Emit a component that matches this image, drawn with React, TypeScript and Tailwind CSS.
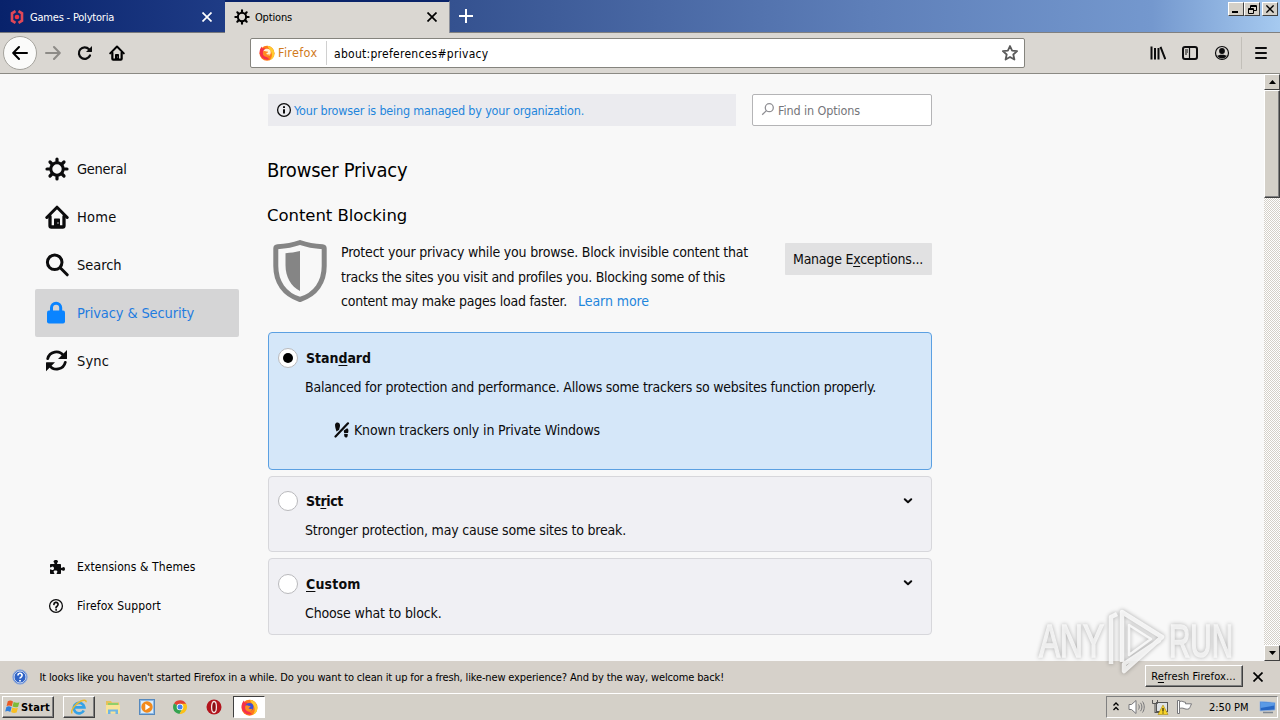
import React from 'react';

const SettingsIcon = ({ size }: { size: number }) => (
  <svg width={size} height={size} viewBox="0 0 24 24" fill="none" stroke="currentColor" className="shrink-0">
    <circle cx="12" cy="12" r="6.2" strokeWidth="3" />
    <path d="M12 5V2M12 22v-3M5 12H2M22 12h-3M7 7 5 5M19 19l-2-2M7 17l-2 2M19 5l-2 2" strokeWidth="3.2" strokeLinecap="round" />
  </svg>
);

const HomeIcon = ({ size }: { size: number }) => (
  <svg width={size} height={size} viewBox="0 0 24 24" fill="none" stroke="currentColor" strokeLinecap="round" strokeLinejoin="round" className="shrink-0">
    <path d="M1.8 12.5 12 2.2l10.2 10.3" strokeWidth="3" />
    <path d="M5 11.5v9.2c0 .8.4 1.3 1.3 1.3h11.4c.9 0 1.3-.5 1.3-1.3v-9.2" strokeWidth="3.3" />
    <path d="M9 22v-7.5c0-.6.4-1 1-1h4c.6 0 1 .4 1 1V22z" fill="currentColor" stroke="none" />
    <circle cx="13" cy="18" r=".7" fill="#f9f9fa" stroke="none" />
  </svg>
);

const SearchIcon = () => (
  <svg width="24" height="24" viewBox="0 0 24 24" fill="none" stroke="currentColor" strokeWidth="3" strokeLinecap="round" className="shrink-0">
    <circle cx="9.7" cy="9.3" r="7.3" />
    <path d="m15.2 14.800 7 7" />
  </svg>
);

const LockIcon = () => (
  <svg width="24" height="24" viewBox="0 0 24 24" className="shrink-0">
    <path d="M6.500 11V6.800a4.600 4.600 0 0 1 9.200 0V11" fill="none" stroke="currentColor" strokeWidth="3" />
    <rect x="2" y="9.500" width="18" height="13" rx="2" fill="currentColor" />
  </svg>
);

const SyncIcon = () => (
  <svg width="24" height="24" viewBox="0 0 24 24" fill="none" stroke="currentColor" strokeWidth="2.800" strokeLinecap="round" className="shrink-0">
    <path d="M2.700 9.700A8.800 8.800 0 0 1 18.600 6.800M20.300 13.300A8.800 8.800 0 0 1 4.400 16.200" />
    <path d="M22 .9v8.500c0 .4-.2.600-.6.600h-8.400zM1 22.300v-8.500c0-.4.200-.6.600-.6H10z" fill="currentColor" stroke="none" />
  </svg>
);

const FirefoxLogo = ({ size, core }: { size: number; core: string }) => (
  <svg width={size} height={size} viewBox="0 0 16 16" className="shrink-0">
    <circle cx="8" cy="8.2" r="7.5" fill="#ff7a1a" />
    <path d="M8.4.8c3.6.6 6.8 3.2 7 7.4a7.4 7.4 0 0 1-4.9 7.1c2.6-2.4 3-5.5 1.8-8C11.4 5 9.500 4 8.400.8z" fill="#ffcb2e" />
    <path d="M.6 7.200C.7 4.500 1.500 3 2.700 1.500c.1.900.4 1.500.900 1.900.9-.3 1.700-.2 2.500.1L4.500 9.500l6 4.800A7.500 7.500 0 0 1 .6 7.200z" fill="#f5304a" />
    <circle cx="8" cy="7.400" r="3.700" fill={core} />
    <path d="M4 6.400c1.300-.9 2.600-.5 3.400.2.700.1 1.500 0 1.700.3-.2.900-1.500 1-1.900 1.900.6.900 2.100.9 3.500.1-.5 1.900-2 3-3.800 2.800-2.200-.2-3.500-2.400-2.900-5.300z" fill="#ff8a22" />
  </svg>
);

const CloseIcon = ({ size = 10 }: { size?: number }) => (
  <svg width={size} height={size} viewBox="0 0 10 10" stroke="currentColor" strokeWidth="1.700" className="shrink-0">
    <path d="m.5.5 9 9M9.500.5l-9 9" />
  </svg>
);

const Radio = ({ checked }: { checked?: boolean }) => (
  <span className="w-5 h-5 shrink-0 rounded-full border border-[#b9b9bc] bg-white flex items-center justify-center">
    {checked && <span className="w-[10px] h-[10px] rounded-full bg-black" />}
  </span>
);

const Chevron = () => (
  <svg width="10" height="6" viewBox="0 0 10 6" fill="none" stroke="#0c0c0d" strokeWidth="2" strokeLinecap="round" strokeLinejoin="round">
    <path d="m1.800 1.200 3.200 3 3.200-3" />
  </svg>
);

const bevel = 'bg-[#d4d0c8] border border-t-white border-l-white border-r-[#404040] border-b-[#404040]';

const navItems = [
  { label: 'General', icon: <SettingsIcon size={24} />, track: 'tracking-[-0.27px]' },
  { label: 'Home', icon: <HomeIcon size={24} />, track: 'tracking-[0.24px]' },
  { label: 'Search', icon: <SearchIcon />, track: 'tracking-[-0.05px]' },
  { label: 'Privacy & Security', icon: <LockIcon />, track: 'tracking-[-0.12px]', active: true },
  { label: 'Sync', icon: <SyncIcon />, track: 'tracking-[0.14px]' },
];

const TabStrip = () => (
  <div className="h-[33px] shrink-0 flex text-[11px] leading-4 bg-[linear-gradient(90deg,#0a246a_0%,#0d2a72_8%,#34518f_35%,#5e7fb9_68%,#7498ce_90%,#a6caf0_100%)]">
    <div className="w-[225px] border-b border-[#77787c] flex items-center text-white pl-[9px] pt-px pr-[13px] bg-[linear-gradient(90deg,#08226b,#1f3c86)]">
      <svg width="16" height="16" viewBox="0 0 16 16" fill="none" stroke="#e04858" strokeWidth="2.600">
        <path d="M6.500 2.200 3 4.300v7.400l3.500 2.100M9.500 2.200 13 4.300v7.400l-3.500 2.100" />
        <circle cx="8" cy="8" r="2.300" fill="#f03445" stroke="none" />
      </svg>
      <span className="ml-[5px] mt-[2px] tracking-[-0.2px]">Games - Polytoria</span>
      <span className="ml-auto"><CloseIcon /></span>
    </div>
    <div className="w-[225px] border-t-2 border-r border-t-[#0a246a] border-r-[#8b8f9a] bg-[#dad7d2] flex items-center pl-[9px] pr-[12px] pb-px">
      <SettingsIcon size={16} />
      <span className="ml-[5px] mt-[2px] tracking-[-0.17px]">Options</span>
      <span className="ml-auto"><CloseIcon /></span>
    </div>
    <div className="flex-1 border-b border-[#808080] flex items-start">
      <svg width="14" height="14" viewBox="0 0 14 14" stroke="#fff" strokeWidth="2" className="ml-[9px] mt-[9px]">
        <path d="M7 0v14M0 7h14" />
      </svg>
      <div className="ml-auto flex pt-[2px] pr-[2px]">
        <div className={`w-4 h-[14px] flex items-end pl-[3px] pb-[2px] ${bevel}`}>
          <span className="w-[6px] h-[2px] bg-black" />
        </div>
        <div className={`w-4 h-[14px] flex items-center justify-center ${bevel}`}>
          <svg width="9" height="9" viewBox="0 0 9 9" fill="none" stroke="#000">
            <path d="M2.500 3V.5h6v5H6M2.500 1.500h6M.5 3.500h5v5h-5zM.5 4.500h5" />
          </svg>
        </div>
        <div className={`w-4 h-[14px] ml-[2px] flex items-center justify-center ${bevel}`}>
          <CloseIcon size={8} />
        </div>
      </div>
    </div>
  </div>
);

const NavBar = () => (
  <div className="h-[41px] shrink-0 bg-[#dad7d2] border-b border-[#8b8a84] flex items-center pl-[3px]">
    <span className="w-[34px] h-[34px] rounded-full bg-[#fbfbfa] border border-[#a5a39d] flex items-center justify-center">
      <svg width="16" height="16" viewBox="0 0 16 16" fill="none" stroke="#000" strokeWidth="2" strokeLinecap="round" strokeLinejoin="round">
        <path d="M15 8H1.500M7 2 1.200 8 7 14" />
      </svg>
    </span>
    <svg width="16" height="16" viewBox="0 0 16 16" fill="none" stroke="#8d8b87" strokeWidth="2" strokeLinecap="round" strokeLinejoin="round" className="ml-[8px]">
      <path d="M1 8h13.500M9 2l5.800 6L9 14" />
    </svg>
    <svg width="16" height="16" viewBox="0 0 16 16" fill="none" stroke="#0c0c0d" strokeWidth="2.200" strokeLinecap="round" className="ml-[16px]">
      <path d="M13 10.500A5.800 5.800 0 1 1 12 4.200" />
      <path d="M15 1v5.600c0 .3-.2.400-.4.400H9z" fill="#0c0c0d" stroke="none" />
    </svg>
    <span className="ml-4"><HomeIcon size={16} /></span>
    <div className="ml-[125px] w-[775px] h-[30px] bg-white border border-[#85847e] rounded-[2px] flex items-center pl-2 text-[12px]">
      <FirefoxLogo size={16} core="#fff3d6" />
      <span className="ml-[3px] mt-px w-[48px] text-[12.5px] tracking-[0.34px] text-[#d17a1c]">Firefox</span>
      <span className="w-px h-6 bg-[#d0d0d0]" />
      <span className="ml-[7px] mt-px tracking-[0.28px]">about:preferences#privacy</span>
      <svg width="16" height="16" viewBox="0 0 16 16" fill="none" stroke="#5a5a5a" strokeWidth="1.800" strokeLinejoin="round" className="ml-auto mr-[6px]">
        <path d="m8 1 2.100 4.600 5 .5-3.800 3.400 1.100 5L8 12l-4.400 2.500 1.100-5L.9 6.100l5-.5z" />
      </svg>
    </div>
    <svg width="16" height="16" viewBox="0 0 16 16" fill="none" stroke="#0c0c0d" strokeWidth="2" className="ml-[125px]">
      <path d="M1.500 1.500v13M5 3v11.500M8.500 3v11.500M10.500 1.800l4.800 12.400" />
    </svg>
    <svg width="16" height="16" viewBox="0 0 16 16" fill="none" stroke="#0c0c0d" className="ml-4">
      <rect x="1" y="2" width="14" height="12" rx="2" strokeWidth="2" />
      <path d="M7.500 2v12" strokeWidth="1.200" />
      <path d="M3 5h3M3 7h3M3 9h2" />
    </svg>
    <svg width="16" height="16" viewBox="0 0 16 16" className="ml-4">
      <circle cx="8" cy="8" r="6.500" fill="none" stroke="#0c0c0d" strokeWidth="1.200" />
      <circle cx="8" cy="6" r="2.900" fill="#0c0c0d" />
      <path d="M3.200 10.500c1.500 0 2-.8 3-.8h3.600c1 0 1.500.8 3 .8a5.400 5.400 0 0 1-9.600 0z" fill="#0c0c0d" />
    </svg>
    <span className="ml-[11px] w-px h-8 bg-[#c2bfb9]" />
    <svg width="12" height="12" viewBox="0 0 12 12" stroke="#0c0c0d" strokeWidth="2" strokeLinecap="round" className="ml-[13px]">
      <path d="M1 1h10M1 6h10M1 11h10" />
    </svg>
  </div>
);

const Sidebar = () => (
  <div className="w-[239px] shrink-0 pl-[35px] pt-[71px]">
    {navItems.map((item) => (
      <div
        key={item.label}
        className={`h-12 rounded-[2px] flex items-center pl-[10px] text-[14.5px] ${item.track} ${item.active ? 'bg-[#d5d5d6] text-[#0a84ff]' : 'text-[#0c0c0d]'}`}
      >
        {item.icon}
        <span className={`ml-2 mt-px ${item.active ? 'text-[#1f7ce0]' : ''}`}>{item.label}</span>
      </div>
    ))}
    <div className="mt-[162px] h-[39px] flex items-center pl-[14px] text-[12px]">
      <svg width="16" height="16" viewBox="0 0 16 16" fill="#0c0c0d">
        <path d="M14.500 8c-.9 0-1.100 1-1.900 1-.4 0-.6-.4-.6-.8V6c0-.6-.4-1-1-1H8.800c-.5 0-.8-.2-.8-.6 0-.8 1-.9 1-1.900S8 1 6.800 1 4.500 1.600 4.500 2.500s1 1.100 1 1.900c0 .4-.3.600-.8.600H2c-.6 0-1 .4-1 1v1.700c0 .5.200.800.600.8.800 0 .9-1 1.900-1S5 8.600 5 9.500 4.400 11 3.500 11s-1.100-.8-1.900-.8c-.4 0-.6.3-.6.800v3c0 .6.400 1 1 1h2.600c.5 0 .8-.2.800-.6 0-.8-.8-.8-.8-1.700s.8-1.200 1.900-1.200 1.900.4 1.900 1.200-.8 1-.8 1.700c0 .4.300.6.800.6H11c.6 0 1-.4 1-1v-2.300c0-.5.200-.8.600-.8.800 0 1 .9 1.900.9S16 11 16 9.900 15.400 8 14.500 8z" />
      </svg>
      <span className="ml-3 tracking-[0.09px]">Extensions &amp; Themes</span>
    </div>
    <div className="h-[39px] flex items-center pl-[13px] text-[12px]">
      <svg width="16" height="16" viewBox="0 0 16 16" fill="none" stroke="#0c0c0d" strokeLinecap="round">
        <circle cx="8" cy="8" r="6.400" strokeWidth="1.300" />
        <path d="M5.900 6.500a2.100 2.100 0 1 1 3.200 1.700c-.7.500-1.100.8-1.100 1.500" strokeWidth="1.700" />
        <circle cx="8" cy="11.900" r=".5" strokeWidth="1" />
      </svg>
      <span className="ml-[13px] tracking-[0.155px]">Firefox Support</span>
    </div>
  </div>
);

const Preferences = () => (
  <div className="ml-[29px] w-[664px] shrink-0 pt-5 text-[14px] text-[#0c0c0d]">
    <div className="flex gap-4">
      <div className="w-[468px] h-8 bg-[#ebebef] flex items-center pl-2 text-[12.5px]">
        <svg width="16" height="16" viewBox="0 0 16 16" fill="none" stroke="#0c0c0d">
          <circle cx="8" cy="8" r="6.400" strokeWidth="1.300" />
          <path d="M8 7.200v4.300M8 4.200v1.900" strokeWidth="2" />
        </svg>
        <span className="ml-[2px] mt-[2px] tracking-[-0.193px] text-[#1f86dc]">Your browser is being managed by your organization.</span>
      </div>
      <div className="w-[180px] h-8 bg-white border border-[#b4b4b6] rounded-[2px] flex items-center pl-2 text-[12.5px] text-[#75757a]">
        <svg width="14" height="14" viewBox="0 0 14 14" fill="none" stroke="#8f8f94" strokeWidth="1.300" className="mb-[3px]">
          <circle cx="8.300" cy="5.700" r="4" />
          <path d="m5.400 8.600-4.200 4.200" />
        </svg>
        <span className="ml-[3px] mt-[2px] tracking-[-0.116px]">Find in Options</span>
      </div>
    </div>
    <h1 className="mt-8 text-[20px] leading-6 tracking-[-0.22px] -ml-px text-black">Browser Privacy</h1>
    <h2 className="mt-[22px] text-[16.5px] leading-6 tracking-[-0.05px] -ml-px text-black font-['DejaVu_Sans',sans-serif]">Content Blocking</h2>
    <div className="mt-3 h-[92px] flex items-start">
      <svg width="64" height="64" viewBox="0 0 64 64">
        <path d="M32 2.500c8 2.800 15 3.800 22.500 4.300 1 .1 1.700.8 1.700 1.800v17.500C56.200 42 48 54.500 32 59.500 16 54.500 7.800 42 7.800 26.100V8.600c0-1 .7-1.700 1.700-1.800C17 6.300 24 5.300 32 2.500z" fill="none" stroke="#858585" strokeWidth="5" strokeLinejoin="round" />
        <path d="M32 11v40c-9-4.500-14.500-14-14.500-26V13.200C22.500 12.800 27 12.200 32 11z" fill="#858585" />
      </svg>
      <div className="ml-[9px] w-[444px] leading-[24.4px] whitespace-nowrap">
        <p className="tracking-[-0.193px]">Protect your privacy while you browse. Block invisible content that</p>
        <p className="tracking-[-0.269px] mt-[0.600px] -mb-[0.600px]">tracks the sites you visit and profiles you. Blocking some of this</p>
        <p className="tracking-[-0.241px]">
          content may make pages load faster.
          <a className="ml-[11px] tracking-[-0.07px] text-[#1f86dc]">Learn more</a>
        </p>
      </div>
      <button className="mt-[3px] w-[147px] h-8 rounded-[1px] bg-[#e1e1e2] pr-px tracking-[-0.228px] whitespace-nowrap">
        Manage E<span className="underline underline-offset-2">x</span>ceptions...
      </button>
    </div>

    <div className="flex flex-col gap-[6px] leading-5">
      <div className="h-[138px] rounded-[4px] border border-[#5ba0e2] bg-[#d5e7f9] pl-[9px] pt-[15px]">
        <div className="flex">
          <Radio checked />
          <b className="ml-2 tracking-[-0.04px]">Stan<span className="underline underline-offset-2">d</span>ard</b>
        </div>
        <p className="mt-[9px] pl-[27px] tracking-[-0.241px] whitespace-nowrap">Balanced for protection and performance. Allows some trackers so websites function properly.</p>
        <div className="mt-[23px] pl-14 flex items-center">
          <svg width="16" height="16" viewBox="0 0 16 16" className="mr-1">
            <path d="M2 .9c2-.9 3.900.1 4 2.300.1 1.900-.7 3-.8 4.500L2.500 9.500C2 7.300-.2 2.300 2 .9zM9.800 8.400l3.300-2.200c1.800.9 1.400 3.200.9 4.800l-3.700.2c-.3-.9-.6-1.900-.5-2.800zM10.200 12h3.500c.3 2-.4 3.500-1.800 3.500s-1.900-1.600-1.700-3.500z" fill="#0c0c0d" />
            <path d="M14 1.300 1.500 14.500" fill="none" stroke="#0c0c0d" strokeWidth="2.200" strokeLinecap="round" />
          </svg>
          <span className="tracking-[-0.144px]">Known trackers only in Private Windows</span>
        </div>
      </div>
      <div className="h-[76px] rounded-[4px] border border-[#d7d7db] bg-[#f0f0f4] pl-[9px] pt-[14px]">
        <div className="flex">
          <Radio />
          <b className="ml-2 tracking-[-0.35px]">St<span className="underline underline-offset-2">r</span>ict</b>
          <span className="ml-auto mr-[18px] mt-[7px]"><Chevron /></span>
        </div>
        <p className="mt-[9px] pl-[27px] tracking-[-0.195px]">Stronger protection, may cause some sites to break.</p>
      </div>
      <div className="h-[77px] rounded-[4px] border border-[#d7d7db] bg-[#f0f0f4] pl-[9px] pt-[15px]">
        <div className="flex">
          <Radio />
          <b className="ml-2 tracking-[0.16px]"><span className="underline underline-offset-2">C</span>ustom</b>
          <span className="ml-auto mr-[18px] mt-[6px]"><Chevron /></span>
        </div>
        <p className="mt-[9px] pl-[27px] tracking-[-0.143px]">Choose what to block.</p>
      </div>
    </div>
  </div>
);

const Scrollbar = () => (
  <div className="ml-auto w-4 shrink-0 flex flex-col bg-[repeating-conic-gradient(#fff_0_25%,#d4d0c8_0_50%)] bg-[length:2px_2px]">
    <div className={`h-4 flex items-center justify-center ${bevel}`}>
      <svg width="7" height="4"><path d="M3.500 0 7 4H0z" /></svg>
    </div>
    <div className={`h-[108px] ${bevel} shadow-[inset_-1px_-1px_#808080]`} />
    <div className={`mt-auto h-4 flex items-center justify-center ${bevel}`}>
      <svg width="7" height="4"><path d="M3.500 4 7 0H0z" /></svg>
    </div>
  </div>
);

const NotificationBar = () => (
  <div className="h-8 shrink-0 bg-[#d6d1ca] flex items-center pl-3 text-[11px] leading-4 whitespace-nowrap">
    <svg width="16" height="16" viewBox="0 0 16 16">
      <circle cx="8" cy="8" r="7.300" fill="#2f63c6" stroke="#9fb4da" />
      <circle cx="8" cy="8" r="6" fill="none" stroke="#fff" strokeWidth=".8" />
      <path d="M5.900 6.400a2.100 2.100 0 1 1 3.100 1.800c-.7.400-1 .8-1 1.400M8 11v1.500" fill="none" stroke="#fff" strokeWidth="1.700" />
    </svg>
    <span className="ml-[11.500px] mt-[2px] tracking-[-0.142px]">
      It looks like you haven't started Firefox in a while. Do you want to clean it up for a fresh, like-new experience? And by the way, welcome back!
    </span>
    <button className={`ml-auto w-[98px] h-[22px] mb-[2px] pt-px pr-px tracking-[0.1px] ${bevel} shadow-[inset_-1px_-1px_#808080]`}>
      R<span className="underline underline-offset-2">e</span>fresh Firefox...
    </button>
    <span className="ml-[10px] mr-[17px]"><CloseIcon /></span>
  </div>
);

const Taskbar = () => (
  <div className="h-[27px] shrink-0 bg-[#d4d0c8] border-t border-white flex items-center pl-[2px] pr-[2px] text-[11px] leading-4">
    <div className={`w-[52px] h-[22px] flex items-center pl-[2px] ${bevel} shadow-[inset_-1px_-1px_#808080]`}>
      <svg width="16" height="16" viewBox="0 0 16 16" className="shrink-0">
        <path d="M2.800 2.200c2-1 3.500-.7 5.200.3L6.800 7.300c-1.700-1-3.200-1.200-5.200-.3z" fill="#ea5a24" />
        <path d="M8.700 2.900c1.800 1 3.500 1.100 5.700.3l-1.300 4.600c-2 .8-3.800.7-5.600-.3z" fill="#7dbb38" />
        <path d="M1.400 7.900c2-.9 3.500-.6 5.200.3L5.300 13c-1.700-1-3.200-1.300-5.100-.4z" fill="#2f7fdc" />
        <path d="M7.300 8.500c1.800 1 3.600 1.100 5.600.3l-1.300 4.700c-2 .8-3.800.6-5.500-.4z" fill="#f8bf22" />
      </svg>
      <b className="tracking-[0.17px] mt-px">Start</b>
    </div>
    <div className={`ml-[9px] w-8 h-[22px] flex items-center justify-center ${bevel} shadow-[inset_-1px_-1px_#808080]`}>
      <svg width="18" height="18" viewBox="0 0 18 18" fill="none">
        <path d="M13.800 12.500A5.300 5.300 0 1 1 14.300 9.300H5" stroke="#35a2e6" strokeWidth="2.700" />
        <path d="M2 15.500C.5 13 4.500 6 11 3c3-1.400 5.300-1 5.200 1.200" stroke="#e9b92f" strokeWidth="1.400" />
      </svg>
    </div>
    <svg width="18" height="18" viewBox="0 0 18 18" className="ml-[9px]">
      <path d="M2 3h5l1 1.500h7V15H2z" fill="#e6c25a" />
      <path d="M4 5h10v5H4z" fill="#8fcf6a" />
      <path d="M2 7h14v8.500H2z" fill="#f8e397" />
      <path d="M4 16v-4.500h10V16h-2.500v-2.500h-5V16z" fill="#6fb5e4" />
    </svg>
    <svg width="16" height="16" viewBox="0 0 16 16" className="ml-[17px]">
      <rect x=".5" y=".5" width="15" height="15" fill="#8db9e6" stroke="#5689bd" />
      <rect x="2" y="2" width="12" height="12" fill="#d9ecfb" />
      <circle cx="8" cy="8" r="5.700" fill="#f28a1c" />
      <path d="m6.300 4.800 5 3.200-5 3.200z" fill="#fff" />
    </svg>
    <svg width="16" height="16" viewBox="0 0 16 16" className="ml-[17px]">
      <path d="M8 8 2 4.500A7 7 0 0 1 14.200 5z" fill="#e34133" />
      <path d="M2 4.500A7 7 0 0 0 7.500 15L10.500 9.500 8 8z" fill="#34a350" />
      <path d="M14.200 4.800A7 7 0 0 1 7.500 15L11 9 8 4.800z" fill="#fbc116" />
      <circle cx="8" cy="8" r="3.300" fill="#fff" />
      <circle cx="8" cy="8" r="2.500" fill="#4283ee" />
    </svg>
    <svg width="16" height="16" viewBox="0 0 16 16" className="ml-[18px]">
      <circle cx="8" cy="8" r="7.500" fill="#b3141d" />
      <ellipse cx="8" cy="8" rx="2.400" ry="5.500" fill="#8b0d14" stroke="#f4e4e4" strokeWidth="1.300" />
    </svg>
    <div className="ml-[11px] w-8 h-[22px] bg-white border border-t-[#404040] border-l-[#404040] border-r-white border-b-white flex items-center justify-center">
      <FirefoxLogo size={17} core="#3d50d8" />
    </div>
    <div className="ml-auto w-[172px] h-[22px] border border-t-[#808080] border-l-[#808080] border-r-white border-b-white flex items-center pl-[6px]">
      <svg width="6" height="9" viewBox="0 0 6 9" fill="none" stroke="#000" strokeWidth="1.300" className="mb-[2px]">
        <path d="m.5 3.500 2.500-2.500 2.500 2.500M.5 8 3 5.500 5.500 8" />
      </svg>
      <svg width="17" height="16" viewBox="0 0 17 16" fill="none" stroke="#77777a" className="ml-[9px]">
        <path d="M1 5.500h2.500L8 1.500v13L3.500 10.500H1z" fill="#fff" />
        <path d="M10.500 5.500c1 1.500 1 3.500 0 5M12.500 3.800c1.900 2.400 1.900 6 0 8.400M14.500 2.500c2.300 3 2.300 8 0 11" />
      </svg>
      <svg width="17" height="16" viewBox="0 0 17 16" className="ml-[7px]">
        <rect x="4.500" y="3.500" width="11" height="9" fill="#dfe3e6" stroke="#555" />
        <path d="M.5 1v3.500h5V1M3 4.500V14M3 13.500h5" fill="none" stroke="#555" />
        <path d="m11 6 5 9.500H6z" fill="#f8d42a" stroke="#a98a10" strokeWidth=".6" />
        <path d="M11 9v3.500M11 13.500v1" stroke="#000" />
      </svg>
      <svg width="17" height="16" viewBox="0 0 17 16" fill="#fff" stroke="#77777a" className="ml-[7px]">
        <path d="M1.500 1.500h2v13h-2z" />
        <path d="M3.500 2.500c3-1 4 .8 6 .8v1.500h6c-1 2-1 3-2.500 5-2 .8-4 .2-5-.3-1.500-.6-3-.5-4.500 0z" />
      </svg>
      <span className="ml-[16px] mt-px w-[50px] whitespace-nowrap tracking-[-0.05px]">2:50 PM</span>
      <svg width="17" height="16" viewBox="0 0 17 16">
        <path d="M1 2.500 16 3.500V11L1 12z" fill="#2767c4" stroke="#9cb9df" strokeWidth=".8" />
        <path d="M1.500 3 15.500 4v2.500L1.500 9z" fill="#5a9ae6" />
        <path d="M4 13.500h10" stroke="#7f8791" strokeWidth="1.500" />
      </svg>
    </div>
  </div>
);

const Watermark = () => (
  <svg width="212" height="72" viewBox="0 0 212 72" className="absolute left-[1034px] top-[604px] overflow-visible drop-shadow-[0_0_2px_rgba(0,0,0,0.4)]">
    <g fill="#fff" stroke="#fff" strokeWidth="1.500" opacity=".72" fontFamily="Liberation Sans, sans-serif" fontSize="47">
      <text x="5" y="53" textLength="65" lengthAdjust="spacingAndGlyphs">ANY</text>
      <text x="135" y="53" textLength="64" lengthAdjust="spacingAndGlyphs">RUN</text>
    </g>
    <g fill="none" stroke="#fff" strokeOpacity=".8" strokeWidth="4.500" strokeLinejoin="round">
      <path d="M77 60V13l6-3" />
      <path d="M88 58V8l40 25L90 67V60l36-24" />
      <path d="M95 21v30l22-16z" strokeWidth="2.500" />
    </g>
  </svg>
);

const App = () => {
  return (
    <div className="relative w-[1280px] h-[720px] overflow-hidden flex flex-col bg-[#f8f8f8] text-black font-['DejaVu_Sans_Condensed','DejaVu_Sans',sans-serif]">
      <TabStrip />
      <NavBar />
      <div className="h-[587px] shrink-0 flex">
        <Sidebar />
        <Preferences />
        <Scrollbar />
      </div>
      <NotificationBar />
      <Taskbar />
      <Watermark />
    </div>
  );
};

export default App;
